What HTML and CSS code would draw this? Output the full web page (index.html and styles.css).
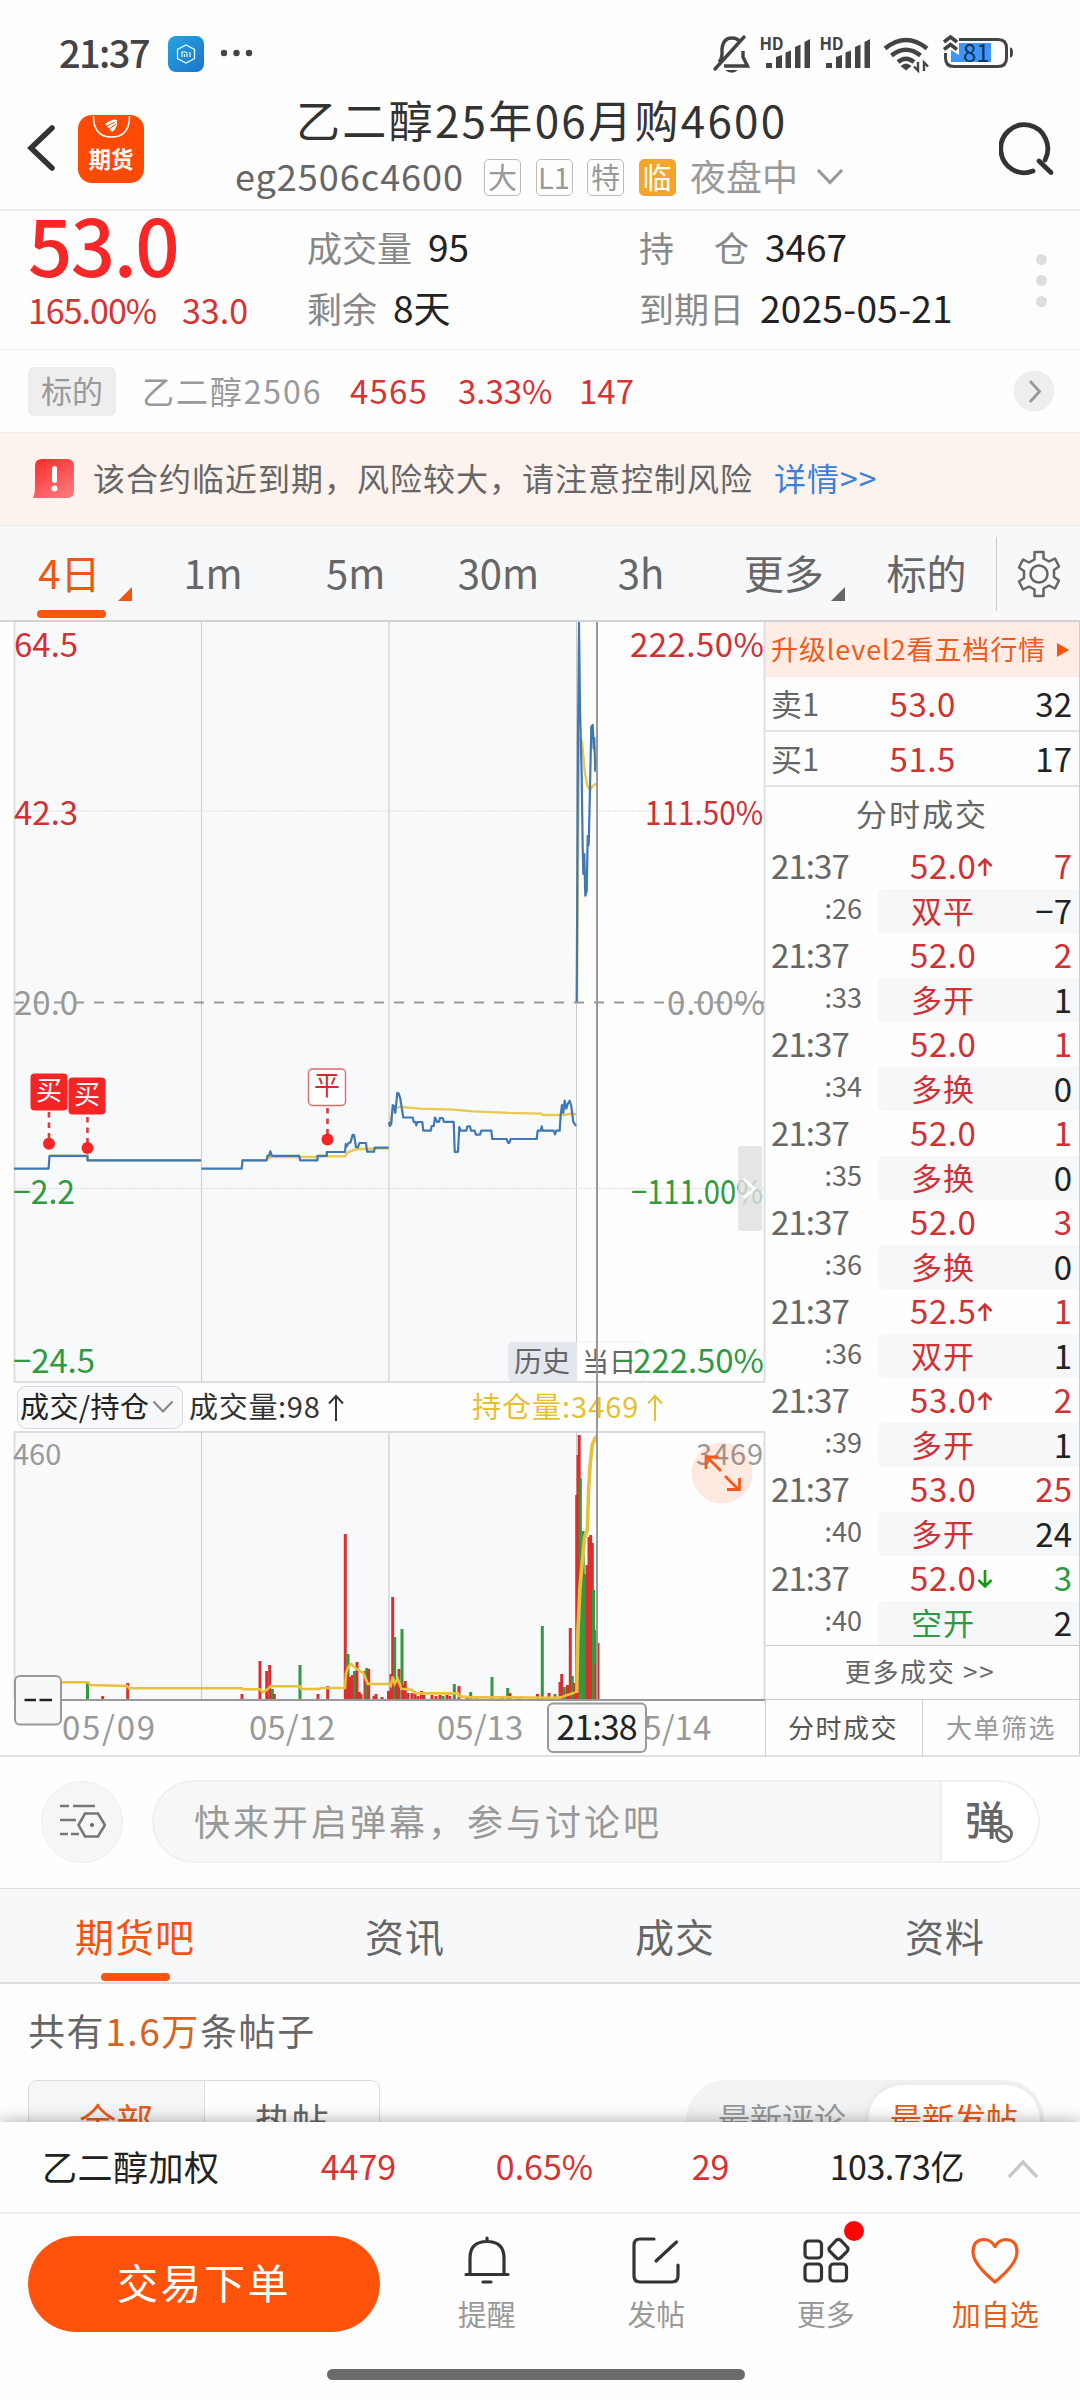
FILE: index.html
```html
<!DOCTYPE html>
<html lang="zh-CN">
<head>
    <meta charset="UTF-8" />
    <meta name="viewport" content="width=device-width, initial-scale=1.0" />
    <title>乙二醇25年06月购4600</title>
    <link rel="stylesheet" href="styles.css">
</head>
<body>
    <div class="status-bar">
        <span class="clock">21:37</span>
        <svg class="mi-icon" width="36" height="36" viewBox="0 0 36 36">
            <defs><linearGradient id="mi" x1="0" y1="0" x2="1" y2="1"><stop offset="0" stop-color="#27a3dd"/><stop offset="1" stop-color="#1b74d0"/></linearGradient></defs>
            <rect width="36" height="36" rx="8" fill="url(#mi)"/>
            <path d="M18 9l8.500 4.500v9L18 27l-8.500-4.500v-9z" fill="none" stroke="#e4fbff" stroke-width="1.300"/>
            <path d="M14 21v-5h3.500q1.500 0 1.500 1.500V21M16.500 18v3M22 16v5" fill="none" stroke="#e4fbff" stroke-width="1.200"/>
        </svg>
        <svg class="more-dots" width="34" height="8" viewBox="0 0 34 8" fill="#444"><circle cx="4" cy="4" r="3.200"/><circle cx="16.500" cy="4" r="3.200"/><circle cx="29" cy="4" r="3.200"/></svg>
        <svg class="status-icons" width="304" height="44" viewBox="712 32 304 44">
            <g fill="none" stroke="#444" stroke-width="3.400">
                <path d="M719 62q3-3 3-8v-5q1-11 10-11 5 0 7 3"/>
                <path d="M743 51v6l4.500 9H724"/>
                <path d="M715 69l29-32" stroke-linecap="round"/>
            </g>
            <path d="M725 70h13q-6 5.500-13 0z" fill="#444"/>
            <g id="signal" fill="#444">
                <text x="759.500" y="50" font-size="16.500" font-weight="700" textLength="24">HD</text>
                <path d="M766 63h6v5h-6zM776 57l6-2v13h-6zM785.500 52.500l5.500-2V68h-5.500zM795 47l5.500-2.500V68H795zM804.500 42l5.500-3V68h-5.500z"/>
            </g>
            <use href="#signal" x="60"/>
            <g fill="none" stroke="#444" stroke-width="4.600">
                <path d="M885 48.500q21-17 42 0"/>
                <path d="M891.500 55.500q14.500-11.500 29 0"/>
                <path d="M898 62q8-6.500 16 0"/>
            </g>
            <path d="M900.500 66q5.500-5 11 0l-5.500 4.500z" fill="#444"/>
            <path d="M918 62v8.500l-4-4M924 71v-8.500l4 4" fill="none" stroke="#444" stroke-width="2.400"/>
            <path d="M959 39.500h39q8.500 0 8.500 8.500v10q0 8.500-8.500 8.500h-44q-8.500 0-8.500-8.500v-5" fill="none" stroke="#444" stroke-width="3"/>
            <path d="M959 43h32v19h-40V50l8 5z" fill="#3d96fb"/>
            <path d="M1010 47.500q3 0 3 5t-3 5z" fill="#444"/>
            <path d="M944 42l6.500-5 6.500 5M944 49.500l6.500-5 6.500 5" fill="none" stroke="#444" stroke-width="3.600"/>
            <text x="963" y="62" font-size="24" fill="#123056">81</text>
        </svg>
    </div>

    <header class="header">
        <svg class="back" width="36" height="54" viewBox="0 0 36 54"><path d="M29 7L8 27l21 20" fill="none" stroke="#333" stroke-width="5.500" stroke-linecap="round"/></svg>
        <svg class="app-icon" width="66" height="68" viewBox="0 0 66 68">
            <rect width="66" height="68" rx="14" fill="#fe4a05"/>
            <path d="M15.500 1q0 21 18 21t18-21" fill="none" stroke="#fff" stroke-width="1.600"/>
            <path d="M27 9q8-6 12-4 1 8-5 12-2-3-7-8z" fill="#fff"/>
            <path d="M29 11l8-4M31 14l7-5" stroke="#fe4a05" stroke-width="1"/>
            <text x="33" y="53" text-anchor="middle" font-size="22.500" font-weight="700" fill="#fff">期货</text>
        </svg>
        <div class="title-box">
            <h1 class="title">乙二醇25年06月购4600</h1>
            <div class="subtitle">
                <span class="code">eg2506c4600</span>
                <span class="tag">大</span>
                <span class="tag">L1</span>
                <span class="tag">特</span>
                <span class="tag tag-hot">临</span>
                <span class="session">夜盘中</span>
                <svg width="28" height="18" viewBox="0 0 28 18"><path d="M2 2l12 12.500L26 2" fill="none" stroke="#999" stroke-width="3.200"/></svg>
            </div>
        </div>
        <svg class="search" width="56" height="56" viewBox="0 0 56 56">
            <path d="M34 50A23.500 24 0 1 1 46 39" fill="none" stroke="#333" stroke-width="4.800" stroke-linecap="round"/>
            <path d="M40 40l12 11.500" stroke="#333" stroke-width="4.800" stroke-linecap="round"/>
        </svg>
    </header>

    <section class="quote">
        <div class="quote-main">
            <div class="price">53.0</div>
            <div class="change"><span>165.00%</span><span>33.0</span></div>
        </div>
        <dl class="quote-col">
            <div><dt>成交量</dt><dd>95</dd></div>
            <div><dt>剩余</dt><dd>8天</dd></div>
        </dl>
        <dl class="quote-col quote-col-wide">
            <div><dt class="spread"><span>持</span><span>仓</span></dt><dd>3467</dd></div>
            <div><dt>到期日</dt><dd class="date">2025-05-21</dd></div>
        </dl>
        <div class="quote-dots"><i></i><i></i><i></i></div>
    </section>

    <section class="underlying">
        <span class="under-tag">标的</span>
        <span class="under-name">乙二醇2506</span>
        <span class="under-price">4565</span>
        <span class="under-pct">3.33%</span>
        <span>147</span>
        <svg class="under-go" width="42" height="42" viewBox="0 0 42 42"><circle cx="21" cy="21" r="20.500" fill="#eee"/><path d="M17 11l9.500 10.500L17 32" fill="none" stroke="#999" stroke-width="2.800"/></svg>
    </section>

    <section class="notice">
        <svg width="42" height="40" viewBox="0 0 42 40">
            <defs><linearGradient id="warn" x1="0" y1="0" x2=".6" y2="1"><stop offset="0" stop-color="#fb2929"/><stop offset="1" stop-color="#ff7276"/></linearGradient></defs>
            <path d="M9 0h25q7 0 7 7v25q0 7-7 7H0q2-4 2-9V7q0-7 7-7z" fill="url(#warn)"/>
            <rect x="19" y="7" width="5" height="17" rx="2.500" fill="#fff"/><circle cx="21.500" cy="29.500" r="3" fill="#fff"/>
        </svg>
        <span class="notice-text">该合约临近到期，风险较大，请注意控制风险</span>
        <a class="notice-link">详情&gt;&gt;</a>
    </section>

    <nav class="period">
        <div class="period-tabs">
            <span class="period-tab active drop">4日</span>
            <span class="period-tab">1m</span>
            <span class="period-tab">5m</span>
            <span class="period-tab">30m</span>
            <span class="period-tab">3h</span>
            <span class="period-tab drop">更多</span>
            <span class="period-tab">标的</span>
        </div>
        <div class="settings">
            <svg width="44" height="48" viewBox="0 0 44 48" fill="none" stroke="#666" stroke-width="2.500" stroke-linejoin="round">
                <path d="M17.500 2h9v6.500l5.500 3 6-3 4 8-5 3.500v7l5 3.500-4 8-6-3-5.500 3V46h-9v-6.500l-5.500-3-6 3-4-8L7 28v-7l-5-3.500 4-8 6 3 5.500-3z"/>
                <circle cx="22" cy="24" r="8.500"/>
            </svg>
        </div>
    </nav>

    <main class="board">
        <div class="chart">
            <svg class="price-chart" width="766" height="761" viewBox="0 622 766 761">
                <rect x="14" y="622" width="563" height="760" fill="#f7f9fb"/>
                <path d="M14.500 622v760M389 622v760M764.500 622v760" stroke="#dfe0e2" stroke-width="2"/>
                <path d="M201.500 622v760M576.500 622v760" stroke="#ccc"/>
                <path d="M14 811h750M14 1188.500h750" stroke="#dcdddf" stroke-dasharray="2 1"/>
                <path d="M14 1382h751" stroke="#dcdddf" stroke-width="2"/>
                <path d="M14 1002.500h750" stroke="#999" stroke-width="2" stroke-dasharray="10 10"/>
                <g fill="none" stroke="#e9c94f" stroke-width="2.400">
                    <path d="M49.500 1156h38v4.300h113.500M241.700 1160.300h24.800q2-3.300 5.500-3.300h46l5-.6h22q1-5 13-7.400l31-.7"/>
                    <path d="M389 1126l4-16 6-3h2.300l19.400 1.600 32.600 1 20 1.800 34.700 1.500 33.300.7 1.500 1.400h20.200l7-1h6"/>
                    <path d="M577 1002l2-264 3 3 3 32.600 2.300 12.400 2.700 4 2.700-4 3.300-2.400"/>
                </g>
                <g class="line-blue">
                    <path d="M14 1168.600h34.600l.9-12.700h38v4.400H201"/>
                    <path d="M201.500 1168.600h40.200l.8-8.300h24l1-4.400h1.500l1.300-4.500 1.700 4.500h27.200l1 4.400h17.300v-4.400h9.300V1152H345l.7-8 1 2.500 1.800-3.500 2-.6 2.100-7.600h1.400l2 12.400h2l1.500-4.200h6.500l1 8.700h7l.7-4.100h14"/>
                    <path d="M389 1122l1 4 1.300-2.400 1.400-18.600 1.300 1 1.300 6.900 2-20 1.400.7 1.600 5 1.400 8.900 1.600 10h9.400l1 4.300h1.600l1 3.600 1-3.400h5l1 8.700h7.400l1-4.700h2l1.300-8.500 2 4.300h2l1-3.800h2.700l1.300 3.800h9.700l1 30h3.300l1.300-24.800 1.400 3.700h5.600l1-4.300h2.700l1 4.300h3.700l1 3.900h4.300l1.300-3.900h10l1 8.300h14.400l1.300 3.900h1.300l1.400-3.900h26l1-8.300h3l1-4.300 1 4.300h11l1.300 3.600 1.300-3.600h3.400l1-16.100L562 1105l1.300 7.900 1.400-12.200 1.600 7.900 1.400-4.600 2-3.300 1.600 5.700 2 15.400 2.700 4.200"/>
                    <path d="M576.700 1002L578 738l1-115 1 86 1.700 67 1 72.600.6 25.400 1-20 1 41.700 1.400-4.700 1-55 1 9 1.300-57 1.300-61 1.400-2 1 23.600.6-10.600 1 33.800"/>
                </g>
                <g stroke="#d83a3e" stroke-width="2.600" stroke-dasharray="5.500 5">
                    <path d="M49 1112v26M87.500 1117v26M327.500 1108v26"/>
                </g>
                <g fill="#f62525">
                    <circle cx="49" cy="1143.700" r="6"/><circle cx="87.500" cy="1148" r="6"/><circle cx="327.500" cy="1139.500" r="6"/>
                    <rect x="30.500" y="1073.500" width="37" height="37" rx="4"/><rect x="68.500" y="1077.500" width="37" height="37" rx="4"/>
                </g>
                <rect x="308.500" y="1069" width="37" height="36.500" rx="4" fill="#fff" stroke="#e06a6c" stroke-width="1.400"/>
                <g font-size="26" text-anchor="middle">
                    <text x="49" y="1100" fill="#fff">买</text><text x="87" y="1104" fill="#fff">买</text><text x="327" y="1095" fill="#c93034">平</text>
                </g>
                <path d="M508 1347q0-5 5-5h64v39h-64q-5 0-5-5z" fill="#e4e7ee"/>
                <path d="M577 1342h62q5 0 5 5v29q0 5-5 5h-62" fill="none" stroke="#eee"/>
                <text x="514" y="1372" font-size="28" fill="#666">历史</text>
                <text x="582" y="1372" font-size="27" fill="#666">当日</text>
                <g class="axis up"><text x="14" y="657">64.5</text><text x="14" y="825">42.3</text></g>
                <g class="axis up end"><text x="764" y="657" textLength="134">222.50%</text><text x="763" y="825" textLength="118" lengthAdjust="spacingAndGlyphs">111.50%</text></g>
                <g class="axis"><text x="14" y="1015">20.0</text><text class="end" x="765" y="1015" textLength="98">0.00%</text></g>
                <g class="axis down"><text x="13" y="1204" textLength="62" lengthAdjust="spacingAndGlyphs">−2.2</text><text x="13" y="1373" textLength="82">−24.5</text></g>
                <g class="axis down end"><text x="763" y="1204" textLength="132" lengthAdjust="spacingAndGlyphs">−111.00%</text><text x="764" y="1373" textLength="149">−222.50%</text></g>
                <rect x="738" y="1146" width="24" height="85" rx="2" fill="#dedede" fill-opacity=".8"/>
                <path d="M744 1179l10 9.500-10 9.500" fill="none" stroke="#fff" stroke-width="3"/>
            </svg>
            <div class="legend">
                <span class="legend-select">成交/持仓<svg width="22" height="14" viewBox="0 0 22 14"><path d="M1.500 1.500L11 11.500l9.500-10" fill="none" stroke="#888" stroke-width="2.200"/></svg></span>
                <span class="legend-vol">成交量:98<svg width="18" height="28" viewBox="0 0 18 28"><path d="M9 27V3M2 9.500L9 2l7 7.500" fill="none" stroke="#333" stroke-width="2"/></svg></span>
                <span class="legend-oi">持仓量:3469<svg width="18" height="28" viewBox="0 0 18 28"><path d="M9 27V3M2 9.500L9 2l7 7.500" fill="none" stroke="#e6c12e" stroke-width="2"/></svg></span>
            </div>
            <svg class="volume-chart" width="766" height="325" viewBox="0 1431 766 325">
                <rect x="14" y="1432" width="563" height="268" fill="#f7f9fb"/>
                <path d="M14 1432h751M14.500 1432v268M389 1432v268M764.500 1432v268" stroke="#dcdddf" stroke-width="2"/>
                <path d="M201.500 1432v268M576.500 1432v268" stroke="#ccc"/>
                <g id="bars"></g>
                <path class="line-oi" d="M62 1682.300h26l2 2.700 37 1 2 2.300h113l1 1h17l3 3 4-2.700 3.700-3.300h29.300l1 2.700h18l2-1h24l1-15 2.300-6 2.700-3 5.700 5 6.600 4 4.700 11h20.700l2 2 2-9.300 2 7 3-5 3.700 10 10 1 5 3.700H458l1 3 12 1h42l40 .4 8-.4 5-2 9-3"/>
                <path class="line-oi late" d="M576.700 1693l1.300-63 2-43 2.700-30 2-20 2.600-7 1.400-43 1.600-24 2-18 2.700-6.700 2-2.300"/>
                <path d="M14 1700h751" stroke="#999" stroke-width="2"/>
                <g font-size="29" fill="#999"><text x="13" y="1464.500">460</text><text x="763" y="1464.500" text-anchor="end" textLength="67">3469</text></g>
                <circle cx="722" cy="1473" r="30.500" fill="#ff5310" fill-opacity=".12"/>
                <path d="M721 1471l-14-14M718.500 1457H706v12M725 1476l14 14M727 1489.500h12.500V1478" fill="none" stroke="#f55a1c" stroke-width="2.800"/>
                <g class="dates"><text x="62" y="1740" textLength="93">05/09</text><text x="249" y="1740">05/12</text><text x="437" y="1740">05/13</text><text x="625" y="1740">05/14</text></g>
                <rect x="15" y="1676" width="46" height="48.500" rx="5" fill="#f7f8fa" stroke="#999" stroke-width="2"/>
                <path d="M24.500 1700h11.500M39.500 1700H52" stroke="#222" stroke-width="2.400"/>
                <rect x="548" y="1703.500" width="98" height="48.500" rx="5" fill="#f7f8fa" stroke="#999" stroke-width="2"/>
                <text x="597" y="1740" font-size="34" fill="#222" text-anchor="middle" textLength="81">21:38</text>
            </svg>
            <i class="crosshair"></i>
        </div>

        <aside class="tape">
            <div class="upgrade">升级level2看五档行情<svg width="12" height="14" viewBox="0 0 12 14"><path d="M0 0l12 7-12 7z" fill="#ff5310"/></svg></div>
            <div class="level"><span>卖1</span><b>53.0</b><em>32</em></div>
            <div class="level"><span>买1</span><b>51.5</b><em>17</em></div>
            <div class="tape-title">分时成交</div>
            <div id="trades"></div>
            <div class="tape-more">更多成交 &gt;&gt;</div>
            <div class="tape-tabs"><span class="on">分时成交</span><span>大单筛选</span></div>
        </aside>
    </main>

    <section class="danmu">
        <div class="danmu-set">
            <svg width="48" height="40" viewBox="0 0 48 40" fill="none" stroke="#777" stroke-width="2.600">
                <path d="M2 4h9M15 4h22M2 18h16M2 32h8M13 32h8"/>
                <path d="M27 11.500h13l7 11.500-7 11.500H27L20.500 23z"/><circle cx="34" cy="23" r="2" fill="#666" stroke="none"/>
            </svg>
        </div>
        <div class="danmu-input">
            <span>快来开启弹幕，参与讨论吧</span>
            <div class="danmu-switch">弹<svg width="20" height="20" viewBox="0 0 20 20"><circle cx="10" cy="10" r="7.500" fill="#fff" stroke="#666" stroke-width="2.800"/><path d="M5 6l10 8" stroke="#666" stroke-width="2.800"/></svg></div>
        </div>
    </section>

    <nav class="info-tabs">
        <span class="active">期货吧</span><span>资讯</span><span>成交</span><span>资料</span>
    </nav>

    <section class="posts">
        <p class="post-count">共有<strong>1.6万</strong>条帖子</p>
        <div class="post-filter">
            <div class="seg"><span class="on">全部</span><span>热帖</span></div>
            <div class="sort"><span>最新评论</span><span class="on">最新发帖</span></div>
        </div>
    </section>

    <footer class="bottom">
        <div class="index-row">
            <span class="index-name">乙二醇加权</span>
            <span>4479</span>
            <span>0.65%</span>
            <span>29</span>
            <span class="index-amt">103.73亿</span>
            <svg width="32" height="20" viewBox="0 0 32 20"><path d="M2 18L16 3l14 15" fill="none" stroke="#c8c8c8" stroke-width="3.400"/></svg>
        </div>
        <div class="actions">
            <button class="trade-btn">交易下单</button>
            <div class="action">
                <svg width="48" height="48" viewBox="0 0 48 48" fill="none" stroke="#333" stroke-width="3.200" stroke-linecap="round">
                    <path d="M24 2v3M7 38V22Q7 5.500 24 5.500T41 22v16M3 38.500h42M20 46h8"/>
                </svg>
                <span>提醒</span>
            </div>
            <div class="action">
                <svg width="48" height="48" viewBox="0 0 48 48" fill="none" stroke="#333" stroke-width="3.200" stroke-linecap="round">
                    <path d="M22 3H8q-6 0-6 6v31q0 6 6 6h32q6 0 6-6V29M44.500 6L24 25"/>
                </svg>
                <span>发帖</span>
            </div>
            <div class="action">
                <svg width="48" height="48" viewBox="0 0 48 48" fill="none" stroke="#333" stroke-width="3.200">
                    <rect x="3" y="5" width="16.500" height="17" rx="3.500"/><rect x="3" y="28" width="16.500" height="17" rx="3.500"/><rect x="28" y="28" width="16.500" height="17" rx="3.500"/>
                    <path d="M34 4.500q2.500-2.500 5 0l6 6.500q2 2 0 4.500l-6 6q-2.500 2.500-5 0l-6-6q-2-2.500 0-4.500z"/>
                </svg>
                <i class="badge"></i>
                <span>更多</span>
            </div>
            <div class="action fav">
                <svg width="48" height="48" viewBox="0 0 48 48" fill="none" stroke="#f05a1e" stroke-width="3.200" stroke-linejoin="round">
                    <path d="M24 46Q2 28 2 16 2 4 13 3.500q7 0 11 7 4-7 11-7 11 .5 11 12.500 0 12-22 30z"/>
                </svg>
                <span>加自选</span>
            </div>
        </div>
        <div class="home-bar"></div>
    </footer>

<script src="script.js"></script>
</body>
</html>
```

FILE: styles.css
```css
* { margin: 0; padding: 0; box-sizing: border-box; }
body {
    width: 1080px;
    height: 2400px;
    overflow: hidden;
    background: #fefefe;
    color: #333;
    font-family: "Noto Sans CJK SC", "Noto Sans", sans-serif;
    font-size: 33px;
    display: flex;
    flex-direction: column;
}
svg { display: block; flex: none; }
i, em, b { font-style: normal; font-weight: 400; }

.status-bar {
    height: 106px;
    display: flex;
    align-items: center;
    padding: 0 64px 0 59px;
}
.clock {
    width: 109px;
    font-size: 38px;
    font-weight: 500;
    line-height: 102px;
    letter-spacing: -1.600px;
    margin-top: -2px;
    color: #444;
}
.mi-icon { margin-top: 2px; }
.more-dots { margin-left: 16px; }
.status-icons { margin: 2px 0 0 auto; }

/* header */
.header {
    height: 105px;
    display: flex;
    border-bottom: 2px solid #eee;
}
.back { margin: 15px 0 0 23px; }
.app-icon { margin: 9px 0 0 19px; }
.title-box { width: 692px; margin-left: 50px; }
.title {
    padding-left: 102px;
    font-size: 44px;
    font-weight: 400;
    line-height: 50px;
    letter-spacing: 2.300px;
    margin-top: -12px;
    height: 56px;
    white-space: nowrap;
}
.subtitle {
    display: flex;
    align-items: center;
    height: 50px;
    padding-left: 41px;
    margin-top: 2px;
    font-size: 36px;
}
.code { width: 249px; letter-spacing: 1px; color: #666; line-height: 44px; margin-top: -4px; }
.tag {
    width: 37px;
    height: 37px;
    margin-right: 14.500px;
    border: 1.500px solid #bbb;
    border-radius: 5px;
    color: #999;
    font-size: 29px;
    line-height: 32px;
    text-align: center;
}
.tag-hot { background: #f4a629; border-color: #f4a629; color: #fff; }
.session { width: 126px; color: #999; font-size: 36px; line-height: 40px; margin-top: -4px; }
.search { margin: 15px 0 0 113px; }

/* quote */
.quote {
    height: 139px;
    display: flex;
    border-bottom: 1px solid #f0f0f0;
}
.quote-main { width: 307px; padding-left: 28px; }
.price {
    font-size: 78px;
    font-weight: 500;
    line-height: 64px;
    height: 67px;
    letter-spacing: -1.600px;
    color: #f72727;
}
.change { display: flex; font-size: 34px; line-height: 63px; color: #d63333; }
.change span:first-child { width: 154px; letter-spacing: -1px; }
.quote-col { width: 332px; padding-top: 5px; font-size: 37px; line-height: 61px; }
.quote-col > div { display: flex; }
.quote-col dt { color: #888; margin-right: 16px; font-size: 35px; }
.quote-col dd { color: #222; }
.quote-col-wide { width: 390px; }
.quote-col-wide dt { width: 110px; }
.spread { display: flex; justify-content: space-between; }
.quote-col .date { letter-spacing: .3px; margin-left: -5px; }
.quote-dots { padding-top: 43px; width: 24px; display: flex; flex-direction: column; align-items: center; gap: 10px; }
.quote-dots i { width: 11px; height: 11px; border-radius: 50%; background: #ddd; }

.underlying {
    height: 83px;
    display: flex;
    align-items: center;
    padding: 0 25px 0 28px;
    border-bottom: 1px solid #eee;
    color: #d63333;
    line-height: 44px;
}
.underlying span { margin-top: -2px; }
.underlying .under-tag {
    width: 88px;
    height: 49px;
    margin-top: 0;
    border-radius: 6px;
    background: #eee;
    color: #999;
    font-size: 31px;
    line-height: 45px;
    text-align: center;
}
.under-name { width: 208px; margin-left: 26px; font-size: 32px; letter-spacing: 1.900px; color: #999; }
.under-price { width: 108px; letter-spacing: 1.200px; }
.under-pct { width: 121px; }
.under-go { margin-left: auto; }

.notice {
    height: 93px;
    display: flex;
    align-items: center;
    padding-left: 33px;
    background: #fdf3ee;
    border-bottom: 1px solid #e9e9ea;
    color: #666;
    font-size: 32px;
    letter-spacing: 1px;
}
.notice-text { margin-left: 18px; width: 681px; line-height: 48px; margin-top: -5px; }
.notice-link { color: #3b80d9; margin-top: -5px; }

/* period tabs */
.period {
    height: 96px;
    display: flex;
    background: #f7f8fa;
    border-bottom: 2px solid #d0d2d4;
    color: #666;
}
.period-tabs { width: 997px; display: grid; grid-template-columns: repeat(7, 142.700px); margin-left: -1px; }
.period-tab {
    position: relative;
    text-align: center;
    font-size: 40px;
    line-height: 93px;
}
.period-tab.active { color: #f3540f; padding-right: 2px; }
.period-tab.active::before {
    content: "";
    position: absolute;
    left: 38px;
    bottom: 2px;
    width: 69px;
    height: 8px;
    border-radius: 4px;
    background: #ff5310;
}
.period-tab.drop::after {
    content: "";
    position: absolute;
    right: 10px;
    bottom: 19px;
    border-style: solid;
    border-width: 0 0 14px 14px;
    border-color: transparent transparent currentColor transparent;
}
.settings {
    flex: 1;
    height: 74px;
    margin-top: 11px;
    display: flex;
    justify-content: center;
    align-items: center;
    border-left: 1px solid #ccc;
}

/* chart board */
.board { height: 1135px; display: flex; border-bottom: 2px solid #e2e2e2; }
.chart { position: relative; width: 765px; flex: none; }
.line-blue { fill: none; stroke: #3f78b3; stroke-width: 2.200; stroke-linejoin: round; }
.line-oi { fill: none; stroke: #e9c03a; stroke-width: 2.600; }
.line-oi.late { stroke-width: 3.600; }
.axis { font-size: 33px; fill: #999; }
.axis.up { fill: #cf3135; }
.axis.down { fill: #2f9a41; }
.end { text-anchor: end; }
.dates { font-size: 33px; fill: #999; }
.legend {
    height: 48px;
    display: flex;
    align-items: center;
    padding-left: 17px;
    font-size: 29px;
    line-height: 40px;
}
.legend span { display: flex; align-items: center; }
.legend-select {
    width: 166px;
    height: 43px;
    padding: 0 0 4px 2px;
    border: 1px solid #d4d8e0;
    border-radius: 9px;
    background: #f7f8fa;
    color: #222;
    letter-spacing: .4px;
}
.legend-select svg { margin: 4px 0 0 3px; }
.legend-vol { width: 289px; padding: 0 0 4px 6px; letter-spacing: .7px; }
.legend-vol svg, .legend-oi svg { margin: 6px 0 0 7px; }
.legend-oi { color: #e6c12e; padding-bottom: 4px; letter-spacing: 1px; }
.crosshair { position: absolute; left: 596px; top: 0; width: 2px; height: 1079px; background: #999; }

.tape { flex: 1; border-right: 1px solid #ccc; font-size: 33px; }
.upgrade {
    height: 55px;
    display: flex;
    align-items: center;
    padding: 0 0 2px 6px;
    background: #ffede5;
    color: #ee5b1c;
    font-size: 27px;
    line-height: 47px;
    letter-spacing: .9px;
}
.upgrade svg { margin: 2px 0 0 11px; }
.level {
    height: 55px;
    display: flex;
    border-bottom: 2px solid #e3e3e3;
    padding: 0 7px 0 6px;
    line-height: 52px;
}
.level span { width: 84px; font-size: 31px; color: #666; }
.level b { width: 101px; text-align: right; color: #cf3135; letter-spacing: .6px; }
.level em { flex: 1; text-align: right; color: #222; }
.tape-title {
    height: 57px;
    font-size: 31px;
    line-height: 52px;
    letter-spacing: 2px;
    text-align: center;
    color: #666;
}
.trade { display: grid; grid-template-columns: 97px 16px 1fr; height: 89px; }
.trade-time { grid-column: 1 / 3; padding-left: 6px; color: #666; line-height: 43px; height: 45px; letter-spacing: -.9px; }
.trade-row { grid-column: 3; display: flex; line-height: 43px; height: 45px; }
.trade-row b { width: 66px; margin-left: 32px; white-space: nowrap; letter-spacing: .6px; }
.trade-row em { flex: 1; text-align: right; padding-right: 7px; }
.trade-row svg { margin: 13px 0 0 1px; }
.trade-sec { text-align: right; font-size: 27px; color: #666; line-height: 38px; }
.trade-kind {
    height: 44px;
    border-radius: 5px 0 0 5px;
    background: #f6f7f9;
    color: #222;
    line-height: 42px;
}
.trade-kind b { margin-left: 33px; font-size: 31px; letter-spacing: 1px; }
.trade .red { color: #cf3135; }
.trade .green { color: #2f9a41; }
.tape-more {
    height: 55px;
    border: solid #ccc;
    border-width: 1px 0;
    padding-right: 4px;
    font-size: 26px;
    line-height: 49px;
    letter-spacing: 1.700px;
    text-align: center;
    color: #666;
}
.tape-tabs { height: 56px; display: grid; grid-template-columns: 1fr 1fr; }
.tape-tabs span { font-size: 26px; line-height: 53px; letter-spacing: 1.500px; text-align: center; color: #999; border-left: 1px solid #ccc; }
.tape-tabs .on { color: #555; padding-right: 2px; }

/* danmu */
.danmu { height: 131px; display: flex; padding: 23px 40px 0 41px; }
.danmu-set {
    width: 82px;
    height: 82px;
    margin-top: 1px;
    border: 1px solid #eee;
    border-radius: 50%;
    background: #f6f6f6;
    display: flex;
    align-items: center;
    justify-content: center;
}
.danmu-input {
    width: 888px;
    height: 83px;
    margin-left: 29px;
    display: flex;
    border: 2px solid #f0f0f0;
    border-radius: 42px;
    background: #f7f7f7;
    overflow: hidden;
    color: #999;
    font-size: 36px;
    line-height: 76px;
    letter-spacing: 3px;
}
.danmu-input > span { flex: 1; padding-left: 40px; }
.danmu-switch {
    position: relative;
    width: 98px;
    padding-left: 23px;
    border-left: 2px solid #eee;
    background: #fff;
    color: #666;
    font-size: 40px;
    font-weight: 500;
    line-height: 72px;
}
.danmu-switch svg { position: absolute; left: 52px; top: 42px; }

.info-tabs {
    height: 96px;
    display: grid;
    grid-template-columns: repeat(4, 1fr);
    border: solid #ddd;
    border-width: 1px 0 2px;
    background: #f7f8fa;
    color: #666;
    font-size: 39px;
    line-height: 92px;
    letter-spacing: 1px;
    text-align: center;
}
.info-tabs .active { position: relative; color: #f3540f; }
.info-tabs .active::after {
    content: "";
    position: absolute;
    left: 101px;
    bottom: 1px;
    width: 69px;
    height: 8px;
    border-radius: 4px;
    background: #ff5310;
}

.posts { height: 138px; padding: 0 36px 0 28px; overflow: hidden; color: #666; }
.post-count { height: 96px; font-size: 37px; line-height: 92px; letter-spacing: 1.600px; }
.post-count strong { font-weight: 400; color: #d8621c; }
.post-filter { display: flex; justify-content: space-between; }
.seg {
    width: 352px;
    height: 76px;
    display: flex;
    border: 1px solid #ddd;
    border-radius: 8px;
    overflow: hidden;
}
.seg span { flex: 1; text-align: center; font-size: 37px; line-height: 78px; }
.seg .on { background: #f5f6f8; border-right: 1px solid #ddd; color: #e85c17; }
.sort {
    width: 358px;
    height: 80px;
    padding: 5px 4px 5px 0;
    display: flex;
    border-radius: 40px;
    background: #f2f3f5;
    color: #999;
    font-size: 32px;
    line-height: 65px;
    text-align: center;
}
.sort span { flex: 1; padding-left: 10px; }
.sort .on { padding-left: 0; border-radius: 35px; background: #fff; color: #e85c17; box-shadow: 0 0 8px rgba(0, 0, 0, .08); }

/* fixed bottom bar */
.bottom { position: relative; flex: 1; background: #fefefe; box-shadow: 0 0 16px rgba(0, 0, 0, .35); }
.index-row {
    height: 92px;
    display: grid;
    grid-template-columns: 224px 185px 187px 145px 222px 1fr;
    align-items: center;
    padding: 0 0 3px 42px;
    border-bottom: 2px solid #eee;
    color: #d63333;
    font-size: 34px;
    line-height: 84px;
    text-align: center;
}
.index-row .index-name { text-align: left; color: #222; font-size: 35px; letter-spacing: .5px; }
.index-row .index-amt { text-align: right; padding-right: 41px; letter-spacing: -.5px; color: #222; }
.index-row svg { margin: 6px 0 0 2px; }
.actions { height: 148px; display: flex; padding-left: 28px; }
.trade-btn {
    width: 352px;
    height: 96px;
    margin: 22px 22px 0 0;
    border: none;
    border-radius: 48px;
    background: #ff530c;
    color: #fff;
    font-family: inherit;
    font-size: 41px;
    line-height: 86px;
    letter-spacing: 2.500px;
    padding-bottom: 6px;
}
.action {
    position: relative;
    width: 169.500px;
    padding-top: 22px;
    display: flex;
    flex-direction: column;
    align-items: center;
    font-size: 29px;
    line-height: 40px;
    color: #999;
}
.action span { margin-top: 9px; }
.action.fav { color: #e85c17; }
.badge { position: absolute; left: 103px; top: 7px; width: 20px; height: 20px; border-radius: 50%; background: #fb0505; }
.home-bar { width: 418px; height: 11px; margin: 7px 0 0 327px; border-radius: 6px; background: #6b6b6b; }
```

FILE: script.js
```javascript
const RED = '#d9302f';
const GREEN = '#2f9a41';
const BASE = 1699;

// x, top, color
const bars = [
    [87.5, 1683, 'g'], [102.7, 1696, 'r'], [127.7, 1683, 'r'], [242, 1694, 'r'],
    [260, 1661, 'r'], [266.7, 1671, 'r'], [269.7, 1665, 'r'], [272.3, 1689, 'g'], [274.3, 1694, 'r'],
    [300, 1665, 'g'], [318, 1694, 'r'], [327.7, 1686, 'r'],
    [345.3, 1534, 'r'], [348, 1654, 'g'], [347.7, 1675, 'r'], [350.3, 1677, 'r'], [352.3, 1675, 'r'],
    [354.5, 1671, 'g'], [357, 1662, 'r'], [359.3, 1692, 'r'], [361, 1694, 'r'],
    [365, 1671, 'r'], [366.7, 1668, 'g'], [368.7, 1669, 'r'], [374, 1696, 'r'], [376, 1694, 'r'], [382, 1697, 'r'],
    [388.5, 1691, 'r'], [391, 1674, 'r'], [392.7, 1597, 'r'], [394.7, 1637, 'g'], [396.5, 1680, 'r'],
    [399, 1669, 'r'], [402, 1629, 'g'], [403.5, 1685, 'r'], [405.3, 1681, 'r'], [408, 1693, 'r'],
    [412, 1693, 'r'], [415, 1694, 'r'], [418, 1696, 'r'], [421.5, 1691, 'r'], [424, 1695, 'r'],
    [432, 1695, 'r'], [436, 1696, 'r'], [440, 1695, 'r'], [443, 1696, 'g'], [447, 1695, 'r'], [450, 1696, 'r'],
    [454.3, 1684, 'g'], [459, 1686, 'r'], [467, 1696, 'r'], [470.7, 1692, 'g'], [477, 1697, 'g'],
    [492, 1677, 'g'], [502, 1697, 'r'], [507.7, 1688, 'g'], [510, 1693, 'r'], [520, 1697, 'r'],
    [537.5, 1694, 'r'], [542.3, 1626, 'g'], [549, 1693, 'r'], [555, 1694, 'g'],
    [560, 1682, 'r'], [561.7, 1674, 'r'], [564.3, 1687, 'g'], [567.5, 1685, 'r'],
    [570.3, 1628, 'r'], [572.3, 1676, 'g'], [574.5, 1683, 'r'],
    [576.7, 1495, 'r'], [578, 1455, 'r'], [579.2, 1435, 'r'], [580.3, 1478, 'g'], [581.5, 1552, 'g'],
    [583.2, 1531, 'g'], [585, 1574, 'g'], [587, 1565, 'r'], [589, 1537, 'r'], [590.7, 1535, 'r'],
    [592.3, 1543, 'r'], [593.5, 1590, 'g'], [594.8, 1630, 'g'], [595.8, 1664, 'r'], [598, 1643, 'r']
];

document.getElementById('bars').innerHTML = bars.map(([x, y, c]) =>
    `<rect x="${x - 1.5}" y="${y}" width="3" height="${BASE - y}" fill="${c === 'r' ? RED : GREEN}"/>`
).join('');

// time, second, price, arrow, volume, volume color, kind, kind color, open interest change
const trades = [
    ['21:37', '26', '52.0', 'up', 7, 'red', '双平', 'red', '−7'],
    ['21:37', '33', '52.0', '', 2, 'red', '多开', 'red', '1'],
    ['21:37', '34', '52.0', '', 1, 'red', '多换', 'red', '0'],
    ['21:37', '35', '52.0', '', 1, 'red', '多换', 'red', '0'],
    ['21:37', '36', '52.0', '', 3, 'red', '多换', 'red', '0'],
    ['21:37', '36', '52.5', 'up', 1, 'red', '双开', 'red', '1'],
    ['21:37', '39', '53.0', 'up', 2, 'red', '多开', 'red', '1'],
    ['21:37', '40', '53.0', '', 25, 'red', '多开', 'red', '24'],
    ['21:37', '40', '52.0', 'down', 3, 'green', '空开', 'green', '2']
];

const arrows = {
    up: '<svg width="16" height="20" viewBox="0 0 16 20"><path d="M8 19V3M1.5 9L8 2.500 14.500 9" fill="none" stroke="#cf3135" stroke-width="2.600"/></svg>',
    down: '<svg width="16" height="20" viewBox="0 0 16 20"><path d="M8 1v16M1.500 11L8 17.500 14.500 11" fill="none" stroke="#139a13" stroke-width="2.600"/></svg>',
    '': ''
};

document.getElementById('trades').innerHTML = trades.map(([time, sec, price, dir, vol, volColor, kind, kindColor, oi]) => `
    <div class="trade">
        <span class="trade-time">${time}</span>
        <div class="trade-row"><b class="red">${price}</b>${arrows[dir]}<em class="${volColor}">${vol}</em></div>
        <span class="trade-sec">:${sec}</span>
        <div class="trade-row trade-kind"><b class="${kindColor}">${kind}</b><em>${oi}</em></div>
    </div>`
).join('');
```
